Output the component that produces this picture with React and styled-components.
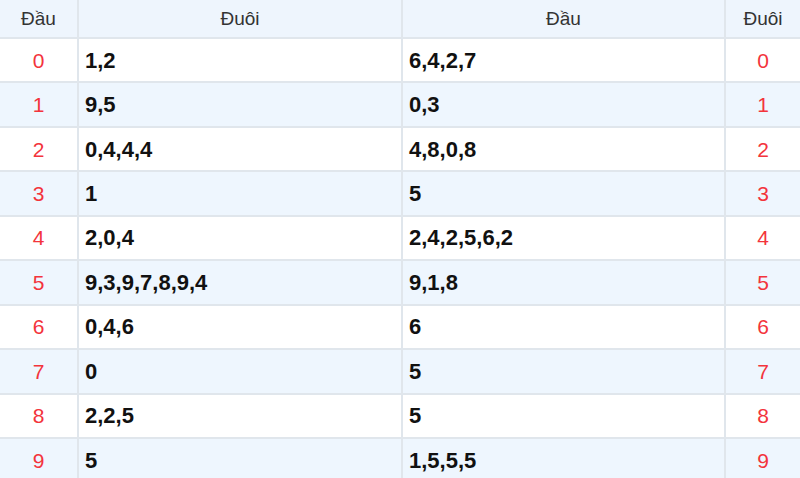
import React from 'react';
import styled, { createGlobalStyle } from 'styled-components';

const GlobalStyle = createGlobalStyle`
  html, body {
    margin: 0;
    padding: 0;
    background: #ffffff;
    overflow: hidden;
  }
  body {
    font-family: "Liberation Sans", Arial, sans-serif;
  }
`;

const Table = styled.div`
  width: 800px;
  display: flex;
  flex-direction: column;
`;

const Row = styled.div`
  display: grid;
  grid-template-columns: 79px 324px 323px 1fr;
  height: ${props => (props.header ? '39px' : '44.44px')};
  box-sizing: border-box;
  border-bottom: 2px solid #e0e6ec;
  background: ${props => (props.alt ? '#eef6fe' : '#ffffff')};
`;

const HeadCell = styled.div`
  display: flex;
  align-items: center;
  justify-content: center;
  box-sizing: border-box;
  border-right: ${props => (props.last ? 'none' : '2px solid #e0e6ec')};
  font-size: 19px;
  color: #333333;
  background: #eef5fd;
`;

const KeyCell = styled.div`
  display: flex;
  align-items: center;
  justify-content: center;
  box-sizing: border-box;
  padding-top: 1px;
  border-right: ${props => (props.last ? 'none' : '2px solid #e0e6ec')};
  font-size: 21px;
  color: #f3343c;
`;

const ValueCell = styled.div`
  display: flex;
  align-items: center;
  box-sizing: border-box;
  padding-left: 6px;
  padding-top: 1px;
  border-right: 2px solid #e0e6ec;
  font-size: 22px;
  font-weight: bold;
  color: #111111;
`;

const rows = [
  ['1,2', '6,4,2,7'],
  ['9,5', '0,3'],
  ['0,4,4,4', '4,8,0,8'],
  ['1', '5'],
  ['2,0,4', '2,4,2,5,6,2'],
  ['9,3,9,7,8,9,4', '9,1,8'],
  ['0,4,6', '6'],
  ['0', '5'],
  ['2,2,5', '5'],
  ['5', '1,5,5,5'],
];

export default function App() {
  return (
    <>
      <GlobalStyle />
      <Table>
        <Row header>
          <HeadCell>Đầu</HeadCell>
          <HeadCell>Đuôi</HeadCell>
          <HeadCell>Đầu</HeadCell>
          <HeadCell last>Đuôi</HeadCell>
        </Row>
        {rows.map(([tail, head], i) => (
          <Row key={i} alt={i % 2 === 1}>
            <KeyCell>{i}</KeyCell>
            <ValueCell>{tail}</ValueCell>
            <ValueCell>{head}</ValueCell>
            <KeyCell last>{i}</KeyCell>
          </Row>
        ))}
      </Table>
    </>
  );
}
